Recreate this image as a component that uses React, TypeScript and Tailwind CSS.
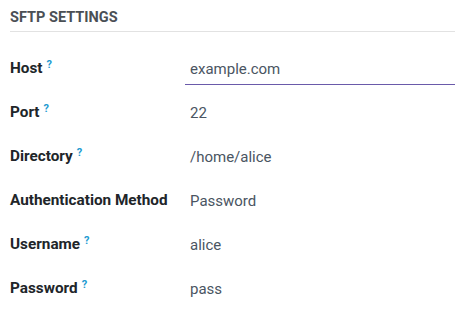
import React from "react";

const rows = [
  { label: "Host", help: true, value: "example.com", input: true },
  { label: "Port", help: true, value: "22" },
  { label: "Directory", help: true, value: "/home/alice" },
  { label: "Authentication Method", help: false, value: "Password" },
  { label: "Username", help: true, value: "alice" },
  { label: "Password", help: true, value: "pass" },
];

export default function App() {
  return (
    <div className="h-[322px] w-[455px] bg-white pl-[10px] pt-[9px] font-['Roboto',sans-serif]">
      <div className="border-b border-[#e2e2e2] pb-[4px] text-[14.5px] font-bold uppercase leading-[18px] text-[#4a4f55]">
        SFTP Settings
      </div>
      <div className="mt-[20px] flex flex-col">
        {rows.map((r) => (
          <div key={r.label} className="flex h-[44px] items-start">
            <div className="w-[175px] pt-[6px] text-[15.3px] font-bold leading-[20px] text-[#212529]">
              {r.label}
              {r.help && (
                <sup className="ml-[4px] text-[11px] font-bold text-[#1d9bd1]">?</sup>
              )}
            </div>
            <div className="flex flex-1 flex-col">
              <div className="pl-[5px] pt-[8px] text-[15px] leading-[19px] text-[#4a5562]">
                {r.value}
              </div>
              {r.input && <div className="mt-[5px] h-px bg-[#6a5aaa]" />}
            </div>
          </div>
        ))}
      </div>
    </div>
  );
}
